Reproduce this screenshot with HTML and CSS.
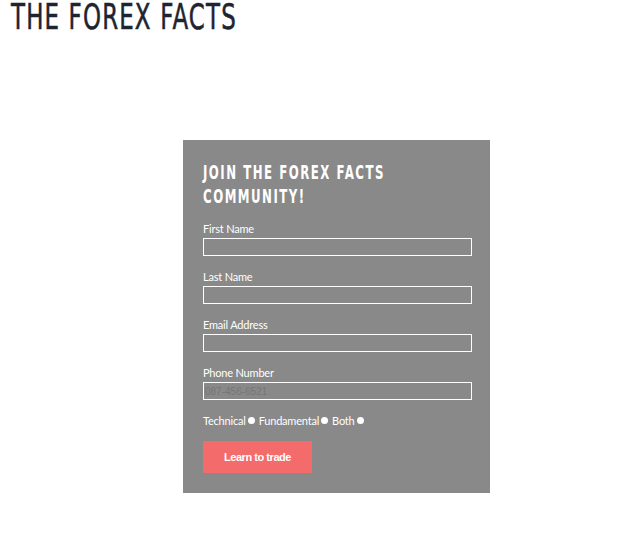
FILE: index.html
```html
<!DOCTYPE html>
<html>
<head>
<meta charset="utf-8">
<link rel="stylesheet" href="styles.css">
</head>
<body>
<header class="site-header">
  <h1 class="site-title">THE FOREX FACTS</h1>
</header>
<main class="main">
  <form class="signup">
    <h2 class="signup-title">JOIN THE FOREX FACTS COMMUNITY!</h2>
    <div class="field">
      <label class="field-label">First Name</label>
      <input class="field-input" type="text">
    </div>
    <div class="field">
      <label class="field-label">Last Name</label>
      <input class="field-input" type="text">
    </div>
    <div class="field">
      <label class="field-label">Email Address</label>
      <input class="field-input" type="text">
    </div>
    <div class="field">
      <label class="field-label">Phone Number</label>
      <input class="field-input" type="text" placeholder="087-456-6521">
    </div>
    <div class="choices">
      <span class="choice">Technical <span class="dot"></span></span>
      <span class="choice">Fundamental <span class="dot"></span></span>
      <span class="choice">Both <span class="dot"></span></span>
    </div>
    <button class="submit" type="button">Learn to trade</button>
  </form>
</main>
</body>
</html>
```

FILE: styles.css
```css
html, body {
  margin: 0;
  padding: 0;
  background: #ffffff;
}

.site-header {
  padding: 0 0 0 11px;
  height: 140px;
}

.site-title {
  display: inline-block;
  margin: 0;
  font-family: "DejaVu Sans", sans-serif;
  font-weight: normal;
  font-size: 36px;
  line-height: 34px;
  letter-spacing: 1.8px;
  color: #1e2430;
  white-space: nowrap;
  transform: scaleX(0.637);
  transform-origin: left top;
  -webkit-text-stroke: 0.6px #1e2430;
}

.main {
  padding-left: 183px;
}

.signup {
  width: 267px;
  height: 333px;
  padding: 20px 20px 0 20px;
  background: #898989;
  display: flex;
  flex-direction: column;
}

.signup-title {
  margin: 0 0 14px 0;
  width: 300px;
  font-family: "DejaVu Sans", sans-serif;
  font-weight: bold;
  font-size: 19px;
  line-height: 24px;
  letter-spacing: 2.4px;
  color: #ffffff;
  transform: scaleX(0.62);
  transform-origin: left top;
}

.field {
  display: flex;
  flex-direction: column;
  margin-bottom: 14px;
}

.field-label {
  font-family: Lato, sans-serif;
  font-size: 11px;
  line-height: 14px;
  color: #ffffff;
  letter-spacing: -0.2px;
}

.field-input {
  box-sizing: border-box;
  width: 269px;
  height: 18px;
  margin: 2px 0 0 0;
  padding: 0 1px;
  border: 1px solid #ffffff;
  background: transparent;
  font-family: "Liberation Sans", sans-serif;
  font-size: 10px;
  color: #ffffff;
  outline: none;
}

.field-input::placeholder {
  color: #767676;
}

.choices {
  display: flex;
  gap: 4px;
  font-family: Lato, sans-serif;
  font-size: 11px;
  line-height: 14px;
  color: #ffffff;
  letter-spacing: -0.2px;
}

.choice {
  display: inline-flex;
  align-items: center;
}

.dot {
  display: inline-block;
  width: 7px;
  height: 7px;
  margin-left: 2px;
  border-radius: 50%;
  background: #ffffff;
  position: relative;
  top: -1px;
}

.submit {
  margin-top: 13px;
  width: 109px;
  height: 32px;
  border: none;
  border-radius: 1px;
  background: #f46b6b;
  color: #ffffff;
  font-family: "Liberation Sans", sans-serif;
  font-weight: bold;
  font-size: 11px;
  letter-spacing: -0.45px;
  padding: 0;
  cursor: pointer;
}
```
